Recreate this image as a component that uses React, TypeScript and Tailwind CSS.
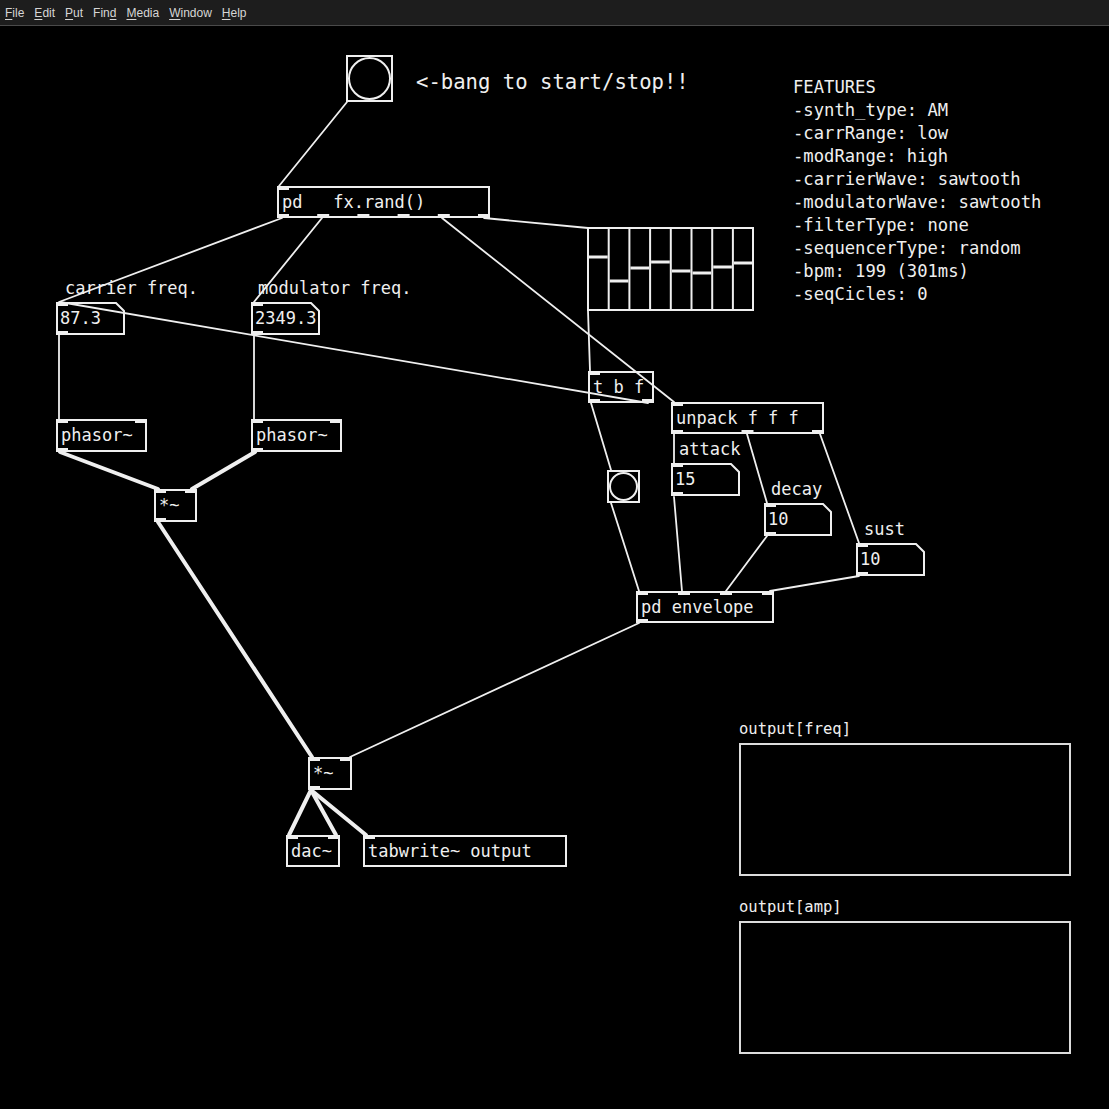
import React from 'react';

// Pure Data patch window: menu bar + canvas with boxes and patch cords.
const OFF = 26; // canvas starts below the menu bar
const IOW = 12;
const IOH = 4;
const INK = '#efefef';

type Box = { x: number; y: number; w: number; h: number; text: string; ins: number; outs: number };

const objects: Box[] = [
  { x: 277, y: 186, w: 213, h: 32, text: 'pd   fx.rand()', ins: 1, outs: 6 },
  { x: 56, y: 419, w: 91, h: 33, text: 'phasor~', ins: 2, outs: 1 },
  { x: 251, y: 419, w: 91, h: 33, text: 'phasor~', ins: 2, outs: 1 },
  { x: 154, y: 489, w: 43, h: 33, text: '*~', ins: 2, outs: 1 },
  { x: 588, y: 371, w: 66, h: 32, text: 't b f', ins: 1, outs: 2 },
  { x: 671, y: 402, w: 153, h: 32, text: 'unpack f f f', ins: 1, outs: 3 },
  { x: 636, y: 591, w: 138, h: 32, text: 'pd envelope', ins: 4, outs: 1 },
  { x: 308, y: 757, w: 44, h: 33, text: '*~', ins: 2, outs: 1 },
  { x: 286, y: 835, w: 54, h: 32, text: 'dac~', ins: 2, outs: 0 },
  { x: 363, y: 835, w: 204, h: 32, text: 'tabwrite~ output', ins: 1, outs: 0 },
];

const numbers: Box[] = [
  { x: 56, y: 302, w: 69, h: 33, text: '87.3', ins: 1, outs: 1 },
  { x: 251, y: 302, w: 69, h: 33, text: '2349.3', ins: 1, outs: 1 },
  { x: 671, y: 463, w: 69, h: 33, text: '15', ins: 1, outs: 1 },
  { x: 764, y: 503, w: 68, h: 33, text: '10', ins: 1, outs: 1 },
  { x: 856, y: 543, w: 69, h: 33, text: '10', ins: 1, outs: 1 },
];

const comments = [
  { x: 65, cy: 288, text: 'carrier freq.' },
  { x: 258, cy: 288, text: 'modulator freq.' },
  { x: 679, cy: 449, text: 'attack' },
  { x: 771, cy: 489, text: 'decay' },
  { x: 864, cy: 529, text: 'sust' },
];

const features = [
  'FEATURES',
  '-synth_type: AM',
  '-carrRange: low',
  '-modRange: high',
  '-carrierWave: sawtooth',
  '-modulatorWave: sawtooth',
  '-filterType: none',
  '-sequencerType: random',
  '-bpm: 199 (301ms)',
  '-seqCicles: 0',
];

// [x1, y1, x2, y2, thick]
const cords: [number, number, number, number, boolean][] = [
  [347, 102, 279, 186, false],
  [282, 218, 59, 302, false],
  [322, 218, 254, 302, false],
  [442, 218, 674, 402, false],
  [484, 218, 588, 228, false],
  [588, 311, 590, 371, false],
  [648, 403, 60, 302, false],
  [59, 335, 59, 419, false],
  [254, 335, 254, 419, false],
  [60, 452, 158, 489, true],
  [255, 452, 192, 489, true],
  [158, 522, 312, 757, true],
  [591, 403, 611, 470, false],
  [611, 503, 639, 591, false],
  [674, 434, 674, 463, false],
  [674, 497, 682, 591, false],
  [747, 434, 767, 503, false],
  [767, 536, 726, 591, false],
  [820, 434, 859, 543, false],
  [859, 576, 770, 591, false],
  [639, 623, 350, 757, false],
  [311, 790, 289, 835, true],
  [311, 790, 336, 835, true],
  [311, 790, 366, 835, true],
];

const sliderKnobs = [257, 281, 268, 262, 271, 273, 267, 263];

const menu = [
  { label: 'File', u: 0 },
  { label: 'Edit', u: 0 },
  { label: 'Put', u: 0 },
  { label: 'Find', u: 3 },
  { label: 'Media', u: 0 },
  { label: 'Window', u: 0 },
  { label: 'Help', u: 0 },
];

function iolets(b: Box) {
  const rects: React.ReactElement[] = [];
  const place = (n: number, i: number) => (n === 1 ? b.x : b.x + (i * (b.w - IOW)) / (n - 1));
  for (let i = 0; i < b.ins; i++) {
    rects.push(<rect key={`i${i}`} x={place(b.ins, i)} y={b.y} width={IOW} height={IOH} fill={INK} />);
  }
  for (let i = 0; i < b.outs; i++) {
    rects.push(<rect key={`o${i}`} x={place(b.outs, i)} y={b.y + b.h - IOH} width={IOW} height={IOH} fill={INK} />);
  }
  return rects;
}

const MenuBar = () => (
  <div className="flex h-[26px] items-center border-b border-[#4a4a4a] bg-[#1d1d1d] pl-[5px] text-[12px] text-[#d6d6d6] font-['Liberation_Sans',sans-serif] gap-[10px]">
    {menu.map((m) => (
      <span key={m.label}>
        {m.label.slice(0, m.u)}
        <span className="underline underline-offset-2">{m.label[m.u]}</span>
        {m.label.slice(m.u + 1)}
      </span>
    ))}
  </div>
);

const Bang = ({ x, y, s }: { x: number; y: number; s: number }) => (
  <div
    className="absolute box-border flex items-center justify-center border-2 border-[#efefef]"
    style={{ left: x, top: y - OFF, width: s, height: s }}
  >
    <div className="h-full w-full rounded-full border-2 border-[#efefef]" />
  </div>
);

const Graph = ({ x, y, label }: { x: number; y: number; label: string }) => (
  <div className="absolute" style={{ left: x, top: y - OFF }}>
    <div className="h-[20px] text-[15.5px] leading-[20px] text-[#efefef]">{label}</div>
    <div className="mt-[4px] box-border h-[133px] w-[332px] border-2 border-[#dcdcdc]" />
  </div>
);

export default function App() {
  return (
    <div className="flex h-[1109px] w-[1109px] flex-col overflow-hidden bg-black">
      <MenuBar />
      <div className="relative flex-1 bg-black font-['DejaVu_Sans_Mono',monospace] text-[17px] text-[#efefef]">
        {/* object boxes */}
        {objects.map((b, i) => (
          <div
            key={`obj${i}`}
            className="absolute box-border flex items-center whitespace-pre border-2 border-[#efefef] pl-[3px] leading-none"
            style={{ left: b.x, top: b.y - OFF, width: b.w, height: b.h }}
          >
            {b.text}
          </div>
        ))}

        {/* number box texts (outline drawn in svg) */}
        {numbers.map((b, i) => (
          <div
            key={`num${i}`}
            className="absolute box-border flex items-center pl-[4px] leading-none"
            style={{ left: b.x, top: b.y - OFF, width: b.w, height: b.h }}
          >
            {b.text}
          </div>
        ))}

        {comments.map((c, i) => (
          <div
            key={`c${i}`}
            className="absolute whitespace-pre leading-[20px]"
            style={{ left: c.x, top: c.cy - 10 - OFF }}
          >
            {c.text}
          </div>
        ))}

        <div className="absolute left-[416px] top-[45px] whitespace-pre text-[20.6px] leading-[22px]">
          &lt;-bang to start/stop!!
        </div>

        <div className="absolute left-[793px] top-[50px] text-[17.2px] leading-[23px]">
          {features.map((f) => (
            <div key={f} className="whitespace-pre">
              {f}
            </div>
          ))}
        </div>

        <Bang x={346} y={55} s={47} />
        <Bang x={607} y={470} s={33} />

        <Graph x={739} y={719} label="output[freq]" />
        <Graph x={739} y={897} label="output[amp]" />

        <svg
          className="pointer-events-none absolute left-0 top-0"
          width={1109}
          height={1083}
          viewBox={`0 ${OFF} 1109 1083`}
        >
          {cords.map(([x1, y1, x2, y2, thick], i) => (
            <line
              key={`l${i}`}
              x1={x1}
              y1={y1}
              x2={x2}
              y2={y2}
              stroke={INK}
              strokeWidth={thick ? 4 : 1.8}
              strokeLinecap="round"
            />
          ))}

          {numbers.map((b, i) => (
            <polygon
              key={`np${i}`}
              points={`${b.x + 1},${b.y + 1} ${b.x + b.w - 9},${b.y + 1} ${b.x + b.w - 1},${b.y + 9} ${b.x + b.w - 1},${b.y + b.h - 1} ${b.x + 1},${b.y + b.h - 1}`}
              fill="none"
              stroke={INK}
              strokeWidth={2}
            />
          ))}

          {/* sequencer sliders */}
          <rect x={588} y={228} width={165} height={82} fill="none" stroke={INK} strokeWidth={2} />
          {[1, 2, 3, 4, 5, 6, 7].map((k) => (
            <line key={`sd${k}`} x1={588 + k * 20.7} y1={228} x2={588 + k * 20.7} y2={310} stroke={INK} strokeWidth={2} />
          ))}
          {sliderKnobs.map((ky, k) => (
            <line key={`sk${k}`} x1={589 + k * 20.7} y1={ky} x2={587 + (k + 1) * 20.7} y2={ky} stroke={INK} strokeWidth={3} />
          ))}

          {objects.map((b, i) => (
            <g key={`io${i}`}>{iolets(b)}</g>
          ))}
          {numbers.map((b, i) => (
            <g key={`nio${i}`}>{iolets(b)}</g>
          ))}
        </svg>
      </div>
    </div>
  );
}
